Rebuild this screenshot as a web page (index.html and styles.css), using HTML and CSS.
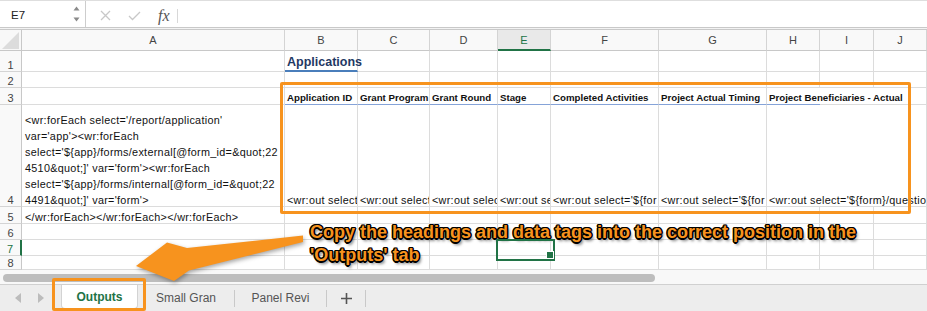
FILE: index.html
```html
<!DOCTYPE html>
<html>
<head>
<meta charset="utf-8">
<link rel="stylesheet" href="styles.css">
</head>
<body>
<div class="app">
  <div class="fbar">
    <div class="namebox">
      <span class="nb-text">E7</span>
      <svg class="spin" width="7" height="16" viewBox="0 0 7 16"><path d="M3.5 0.5 L6.5 4.5 L0.5 4.5Z" fill="#8a8a8a"/><path d="M0.5 11.5 L6.5 11.5 L3.5 15.5Z" fill="#8a8a8a"/></svg>
    </div>
    <div class="ficons">
      <svg class="ico-x" width="11" height="11" viewBox="0 0 11 11"><path d="M1 1L10 10M10 1L1 10" stroke="#c8c8c8" stroke-width="1.3" fill="none"/></svg>
      <svg class="ico-check" width="13" height="10" viewBox="0 0 13 10"><path d="M1 5L4.5 8.5L12 1" fill="none" stroke="#c8c8c8" stroke-width="1.3"/></svg>
      <span class="fx">fx</span>
      <span class="fsep"></span>
    </div>
    <div class="finput"></div>
  </div>
  <div class="fdiv"></div>

  <div class="grid">
    <div class="corner"><svg width="21" height="20" viewBox="0 0 21 20"><polygon points="2,19 19,2 19,19" fill="#dcdcdc"/></svg></div>
    <div class="ch">A</div><div class="ch">B</div><div class="ch">C</div><div class="ch">D</div><div class="ch ch-sel">E</div><div class="ch">F</div><div class="ch">G</div><div class="ch">H</div><div class="ch">I</div><div class="ch">J</div>

    <div class="rh">1</div>
    <div class="c ca"></div><div class="c title">Applications</div><div class="c"></div><div class="c"></div><div class="c"></div><div class="c"></div><div class="c"></div><div class="c"></div><div class="c"></div><div class="c"></div>

    <div class="rh">2</div>
    <div class="c ca"></div><div class="c"></div><div class="c"></div><div class="c"></div><div class="c"></div><div class="c"></div><div class="c"></div><div class="c"></div><div class="c"></div><div class="c"></div>

    <div class="rh">3</div>
    <div class="c ca"></div>
    <div class="c hd">Application ID</div>
    <div class="c hd">Grant Program</div>
    <div class="c hd">Grant Round</div>
    <div class="c hd">Stage</div>
    <div class="c hd">Completed Activities</div>
    <div class="c hd">Project Actual Timing</div>
    <div class="c hd hd-span span3">Project Beneficiaries - Actual</div>

    <div class="rh">4</div>
    <div class="c ca a4">
      <div>&lt;wr:forEach select='/report/application'</div>
      <div>var='app'&gt;&lt;wr:forEach</div>
      <div>select='${app}/forms/external[@form_id=&amp;quot;22</div>
      <div>4510&amp;quot;]' var='form'&gt;&lt;wr:forEach</div>
      <div>select='${app}/forms/internal[@form_id=&amp;quot;22</div>
      <div>4491&amp;quot;]' var='form'&gt;</div>
    </div>
    <div class="c">&lt;wr:out select</div>
    <div class="c">&lt;wr:out select</div>
    <div class="c">&lt;wr:out selec</div>
    <div class="c">&lt;wr:out se</div>
    <div class="c">&lt;wr:out select='${for</div>
    <div class="c">&lt;wr:out select='${for</div>
    <div class="c span3">&lt;wr:out select='${form}/questio</div>

    <div class="rh">5</div>
    <div class="c ca">&lt;/wr:forEach&gt;&lt;/wr:forEach&gt;&lt;/wr:forEach&gt;</div><div class="c"></div><div class="c"></div><div class="c"></div><div class="c"></div><div class="c"></div><div class="c"></div><div class="c"></div><div class="c"></div><div class="c"></div>

    <div class="rh">6</div>
    <div class="c ca"></div><div class="c"></div><div class="c"></div><div class="c"></div><div class="c"></div><div class="c"></div><div class="c"></div><div class="c"></div><div class="c"></div><div class="c"></div>

    <div class="rh rh-sel">7</div>
    <div class="c ca"></div><div class="c"></div><div class="c"></div><div class="c"></div><div class="c c-sel"></div><div class="c"></div><div class="c"></div><div class="c"></div><div class="c"></div><div class="c"></div>

    <div class="rh">8</div>
    <div class="c ca"></div><div class="c"></div><div class="c"></div><div class="c"></div><div class="c"></div><div class="c"></div><div class="c"></div><div class="c"></div><div class="c"></div><div class="c"></div>
  </div>

  <div class="hscroll"><div class="thumb"></div></div>

  <div class="tabs">
    <div class="tnav">
      <svg width="6" height="10" viewBox="0 0 6 10"><path d="M6 0 L0 5 L6 10Z" fill="#bcbcbc"/></svg>
      <svg width="6" height="10" viewBox="0 0 6 10"><path d="M0 0 L6 5 L0 10Z" fill="#bcbcbc"/></svg>
    </div>
    <div class="tab tab-active">Outputs</div>
    <div class="tab tab-small">Small Gran</div>
    <span class="tsep"></span>
    <div class="tab tab-panel">Panel Revi</div>
    <span class="tsep"></span>
    <div class="tab tab-plus"><svg width="11" height="11" viewBox="0 0 11 11"><path d="M5.5 0V11M0 5.5H11" stroke="#555" stroke-width="1.6"/></svg></div>
    <span class="tsep"></span>
  </div>

  <div class="hl-box"></div>
  <div class="hl-tab"></div>
  <svg class="arrow" width="927" height="311" viewBox="0 0 927 311"><polygon points="303,235.5 187,248 167,242.5 136,266 174,281 189,270.5 303,242" fill="#f7931e"/></svg>
  <div class="note">Copy the headings and data tags into the correct position in the<br>'Outputs' tab</div>
</div>
</body>
</html>
```

FILE: styles.css
```css
* { box-sizing: border-box; margin: 0; padding: 0; }
html, body { width: 927px; height: 311px; overflow: hidden; background: #fff; }
body { font-family: "Liberation Sans", Arial, sans-serif; color: #222; }

.app { position: relative; width: 927px; height: 311px; display: flex; flex-direction: column; }

/* formula bar */
.fbar { height: 27px; flex: none; display: flex; border-top: 1px solid #dedede; background: #fff; }
.namebox { width: 86px; border-right: 1px solid #cdcdcd; display: flex; align-items: center; padding-left: 11px; padding-right: 5px; }
.nb-text { font-size: 11.5px; color: #222; padding-top: 1px; }
.spin { margin-left: auto; }
.ficons { display: flex; align-items: center; padding-top: 3px; }
.ico-x { margin-left: 14px; }
.ico-check { margin-left: 17px; }
.fx { margin-left: 17px; font-family: "Liberation Serif", serif; font-style: italic; font-size: 16px; color: #555; line-height: 16px; }
.fsep { margin-left: 7px; width: 1px; height: 14px; background: #d8d8d8; }
.finput { flex: 1; }
.fdiv { height: 3px; flex: none; border-top: 1px solid #c9c9c9; border-bottom: 1px solid #c9c9c9; background: #f3f3f3; }

/* grid */
.grid {
  flex: none;
  display: grid;
  grid-template-columns: 22px 263px 73px 72px 68px 53px 108px 108px 53px 54px 53px;
  grid-template-rows: 21px 21px 16px 17px 102px 17px 16px 16px 14px;
  font-size: 10.8px;
  letter-spacing: 0.3px;
  color: #111;
}
.corner { background: #f8f8f8; border-right: 1px solid #c8c8c8; border-bottom: 1px solid #c8c8c8; }
.corner svg { display: block; }
.ch { background: #f9f9f9; border-right: 1px solid #d4d4d4; border-bottom: 1px solid #c8c8c8; display: flex; align-items: center; justify-content: center; color: #444; font-size: 11px; letter-spacing: 0; }
.ch-sel { background: #e9e9e9; color: #217346; border-bottom: 2px solid #217346; }
.rh { background: #f9f9f9; border-right: 1px solid #c8c8c8; border-bottom: 1px solid #d4d4d4; display: flex; align-items: flex-end; justify-content: center; color: #444; font-size: 11px; line-height: 12px; letter-spacing: 0; }
.rh-sel { color: #217346; border-right: 2px solid #217346; }

.c { border-right: 1px solid #dcdcdc; border-bottom: 1px solid #dcdcdc; overflow: hidden; white-space: nowrap; display: flex; align-items: flex-end; padding: 0 0 0 2px; line-height: 12px; }
.ca { padding-left: 3px; }
.a4 { flex-direction: column; justify-content: flex-end; align-items: flex-start; gap: 4px; }
.span3 { grid-column: span 3; }

.title { font-weight: bold; font-size: 12.5px; line-height: 15px; letter-spacing: 0; color: #1f3864; border-bottom: 2px solid #4a7ebb; padding-bottom: 0; overflow: visible; position: relative; z-index: 1; }
.hd { font-weight: bold; font-size: 9.7px; letter-spacing: 0; color: #111; border-bottom-color: #85a3d8; }
.hd-span { border-bottom: 0; padding-bottom: 1px; background: linear-gradient(#85a3d8, #85a3d8) left bottom / 53px 1px no-repeat, linear-gradient(#dcdcdc, #dcdcdc) left bottom / 100% 1px no-repeat; }

.c-sel { position: relative; overflow: visible; z-index: 2; }
.c-sel::after { content: ""; position: absolute; left: -2px; top: -1px; width: 55px; height: 18px; border: 2px solid #217346; }
.c-sel::before { content: ""; position: absolute; right: -4px; bottom: -4px; width: 6px; height: 6px; background: #217346; border: 1px solid #fff; z-index: 3; }

/* scrollbar */
.hscroll { height: 15px; flex: none; background: #f8f8f8; border-bottom: 1px solid #d0d0d0; padding: 4px 0 0 3px; }
.thumb { width: 652px; height: 8px; border-radius: 4px; background: #bdbdbd; }

/* tabs */
.tabs { flex: 1; background: #ededed; display: flex; align-items: stretch; font-size: 12px; }
.tnav { width: 61px; display: flex; align-items: center; padding-left: 15px; gap: 17px; }
.tnav svg { display: block; }
.tab { display: flex; align-items: center; justify-content: center; color: #555; }
.tab-active { width: 77px; background: #fff; border: 1px solid #d3d3d3; border-top: 0; border-radius: 0 0 4px 4px; margin-bottom: 2px; color: #217346; font-weight: bold; }
.tab-small { width: 96px; }
.tab-panel { width: 91px; }
.tab-plus { width: 38px; }
.tsep { width: 1px; height: 17px; align-self: center; background: #c9c9c9; }

/* annotations */
.hl-box { position: absolute; left: 280px; top: 82px; width: 631px; height: 132px; border: 3px solid #f7931e; border-radius: 2px; }
.hl-tab { position: absolute; left: 52px; top: 278px; width: 94px; height: 33px; border: 3px solid #f7931e; border-radius: 2px; }
.arrow { position: absolute; left: 0; top: 0; filter: drop-shadow(1px 2px 2px rgba(0,0,0,0.35)); }
.note {
  position: absolute; left: 310px; top: 221px;
  font-family: "Liberation Sans", Arial, sans-serif; font-weight: bold; font-size: 18px; line-height: 23px;
  color: #f7931e; white-space: nowrap;
  text-shadow: -1.5px 0 0 #000, 1.5px 0 0 #000, 0 -1.5px 0 #000, 0 1.5px 0 #000, -1px -1px 0 #000, 1px -1px 0 #000, -1px 1px 0 #000, 1px 1px 0 #000, 2px 3px 3px rgba(0,0,0,0.55);
}
```
